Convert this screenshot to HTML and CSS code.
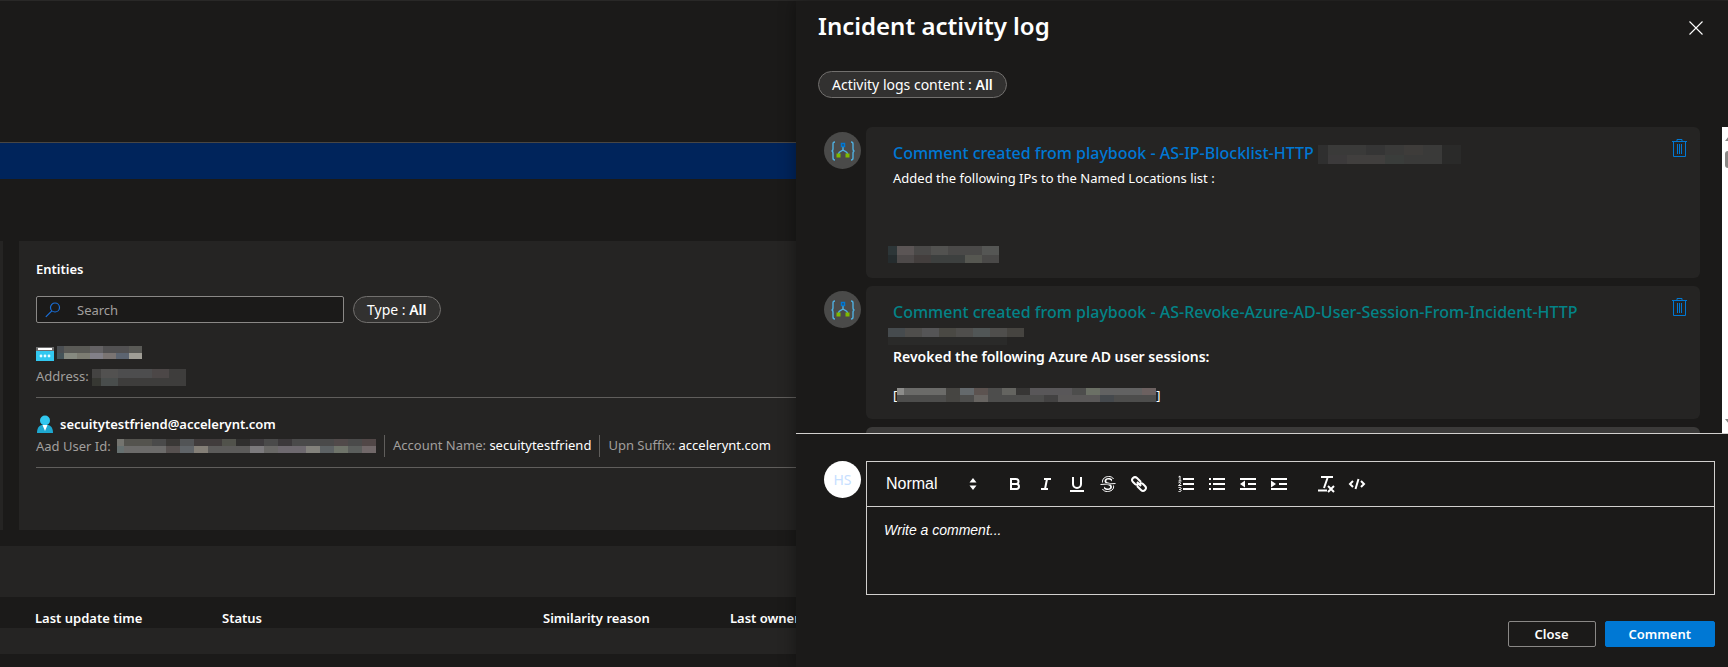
FILE: index.html
```html
<!DOCTYPE html>
<html lang="en">
<head>
<meta charset="utf-8">
<title>Incident activity log</title>
<link rel="stylesheet" href="styles.css">
</head>
<body>
<svg class="sprite" aria-hidden="true">
  <symbol id="playbook" viewBox="0 0 24 20">
    <path d="M4 1C2.500 1 2 1.500 2 3v4.500C2 9 1.500 10 .5 10 1.500 10 2 11 2 12.500V17c0 1.500.5 2 2 2M20 1c1.500 0 2 .5 2 2v4.500c0 1.500.5 2.500 1.500 2.500-1 0-1.500 1-1.500 2.500V17c0 1.500-.5 2-2 2" fill="none" stroke="#50b0e0" stroke-width="1.400"/>
    <path d="M12 6v3M12 8.500c0 2-4.500 1.500-4.500 4.500M12 8.500c0 2 4.500 1.500 4.500 4.500" fill="none" stroke="#50b0e0" stroke-width="1.400"/>
    <path d="M10.500 2.500h3v3h-3z" fill="#3a4a58" stroke="#0078d4" stroke-width="1.500"/>
    <path d="M5.500 12.500h4v4h-4zM14.500 12.500h4v4h-4z" fill="#7fba00"/>
  </symbol>
  <symbol id="trash" viewBox="0 1 16 20">
    <path d="M1 3.500h15M6 3V1.500h5V3M2.500 4v14.500h12V4" fill="none" stroke="currentColor"/>
    <path d="M6.500 6v10M8.500 6v10M10.500 6v10" fill="none" stroke="currentColor"/>
  </symbol>
</svg>
<div class="app">
  <main class="incident">
    <div class="banner"></div>
    <div class="widgets">
      <div class="widget-previous"></div>
      <section class="entities">
        <h2 class="entities-title">Entities</h2>
        <div class="filters">
          <label class="search">
            <svg class="search-icon" viewBox="0 0 16 16" aria-hidden="true"><circle cx="10" cy="5.500" r="4.500" fill="none" stroke="#1a6fd8" stroke-width="1.200"/><path d="M6.800 8.800.8 14.800" stroke="#1a6fd8" stroke-width="1.200"/></svg>
            <input class="search-input" type="text" placeholder="Search" aria-label="Search">
          </label>
          <button class="pill" type="button">Type : <b>All</b></button>
        </div>
        <div class="entity">
          <div class="entity-name">
            <svg class="entity-icon" viewBox="0 0 18 18" aria-hidden="true"><path d="M0 2h18v14H0z" fill="#32c8f0"/><path d="M0 2h18v4H0z" fill="#6e6e6e"/><path d="M2 3h14v2H2z" fill="#fff"/><g fill="#e6fbff"><circle cx="5" cy="11" r="1.400"/><circle cx="9" cy="11" r="1.400"/><circle cx="13" cy="11" r="1.400"/></g></svg>
            <svg class="mask mask-ip" viewBox="0 0 85 13" preserveAspectRatio="none" aria-hidden="true"><path d="M0 0h85v13H0z" fill="#5a5a56"/><path d="M0 0h7v7H0z" fill="#4a4e52"/><path d="M33 0h13v7H33z" fill="#646264"/><path d="M46 0h26v7H46z" fill="#525152"/><path d="M0 7h7v6H0z" fill="#455459"/><path d="M7 7h13v6H7z" fill="#868a80"/><path d="M20 7h13v6H20z" fill="#7c7c72"/><path d="M33 7h13v6H33z" fill="#828088"/><path d="M46 7h13v6H46z" fill="#7a7472"/><path d="M59 7h13v6H59z" fill="#5c6470"/><path d="M72 7h13v6H72z" fill="#a09e96"/></svg>
          </div>
          <div class="entity-facts">
            <span class="fact">Address: <svg class="mask mask-address" viewBox="0 0 94 17" preserveAspectRatio="none" aria-hidden="true"><path d="M0 0h94v17H0z" fill="#3e3d3c"/><path d="M0 0h9v9H0z" fill="#444342"/><path d="M9 0h17v9H9z" fill="#525150"/><path d="M26 0h34v9H26z" fill="#4d4d4e"/><path d="M60 0h17v9H60z" fill="#4c4747"/><path d="M0 9h9v8H0z" fill="#373833"/><path d="M9 9h17v8H9z" fill="#494d4c"/></svg></span>
          </div>
        </div>
        <div class="entity">
          <div class="entity-name">
            <svg class="entity-icon" viewBox="0 0 18 18" aria-hidden="true"><path d="M1 18c0-5 2-7.500 5-8h6c3 .5 5 3 5 8z" fill="#1ea8d0"/><circle cx="9" cy="5.500" r="5" fill="#32c8f0"/><path d="M6.500 10h5L9 16z" fill="#fff"/></svg>
            <b class="entity-label">secuitytestfriend@accelerynt.com</b>
          </div>
          <div class="entity-facts">
            <span class="fact">Aad User Id: <svg class="mask mask-user" viewBox="0 0 259 14" preserveAspectRatio="none" aria-hidden="true"><path d="M0 0h259v14H0z" fill="#4a4a4a"/><path d="M0 0h7v7H0z" fill="#74746f"/><path d="M7 0h28v7H7z" fill="#54534e"/><path d="M49 0h14v7H49z" fill="#3a3836"/><path d="M63 0h14v7H63z" fill="#525456"/><path d="M77 0h28v7H77z" fill="#413c3c"/><path d="M105 0h14v7h-14z" fill="#51524b"/><path d="M119 0h14v7h-14z" fill="#302f2e"/><path d="M133 0h14v7h-14z" fill="#3e3b3e"/><path d="M161 0h14v7h-14z" fill="#3c393b"/><path d="M217 0h14v7h-14z" fill="#514a4a"/><path d="M245 0h14v7h-14z" fill="#514747"/><path d="M0 7h7v7H0z" fill="#667070"/><path d="M7 7h42v7H7z" fill="#6c6b6a"/><path d="M49 7h14v7H49z" fill="#575150"/><path d="M63 7h14v7H63z" fill="#606468"/><path d="M77 7h14v7H77z" fill="#847f77"/><path d="M91 7h42v7H91z" fill="#5c5b5a"/><path d="M133 7h14v7h-14z" fill="#7c7a7d"/><path d="M147 7h14v7h-14z" fill="#696866"/><path d="M161 7h28v7h-28z" fill="#6e696f"/><path d="M189 7h14v7h-14z" fill="#83827c"/><path d="M203 7h14v7h-14z" fill="#5d6264"/><path d="M217 7h14v7h-14z" fill="#6f746a"/><path d="M231 7h14v7h-14z" fill="#5b5e5c"/><path d="M245 7h14v7h-14z" fill="#716869"/></svg></span>
            <span class="fact">Account Name: <em>secuitytestfriend</em></span>
            <span class="fact">Upn Suffix: <em>accelerynt.com</em></span>
          </div>
        </div>
      </section>
    </div>
    <section class="similar">
      <table class="similar-table">
        <thead><tr><th class="col-s">Last update time</th><th class="col-l">Status</th><th class="col-s">Similarity reason</th><th>Last owner</th></tr></thead>
      </table>
      <div class="similar-row"></div>
    </section>
  </main>

  <aside class="panel">
    <header class="panel-head">
      <h1 class="panel-title">Incident activity log</h1>
      <button class="icon-button close-x" type="button" aria-label="Close panel"><svg viewBox="0 0 14 14" width="14" height="14"><path d="M.5.5l13 13M13.500.5l-13 13" stroke="#fff" stroke-width="1.100"/></svg></button>
    </header>
    <div class="panel-filter"><button class="pill" type="button">Activity logs content : <b>All</b></button></div>
    <div class="log">
      <div class="log-list">
        <article class="log-entry">
          <div class="avatar"><svg width="24" height="20" aria-hidden="true"><use href="#playbook"/></svg></div>
          <div class="card card-tall">
            <div class="card-body">
              <h3 class="card-title">Comment created from playbook - AS-IP-Blocklist-HTTP <svg class="mask mask-title" viewBox="0 0 143 19" preserveAspectRatio="none" aria-hidden="true"><path d="M0 0h143v19H0z" fill="#3a3a39"/><path d="M0 0h10v19H0z" fill="#2f2f2f"/><path d="M10 10h19v9H10z" fill="#3c3a3b"/><path d="M29 10h38v9H29z" fill="#413f3e"/><path d="M48 0h19v10H48z" fill="#353535"/><path d="M67 10h19v9H67z" fill="#3a3d3b"/><path d="M86 0h19v10H86z" fill="#3e3c3a"/><path d="M124 0h19v19h-19z" fill="#2a2a29"/></svg></h3>
              <p class="card-text">Added the following IPs to the Named Locations list :</p>
              <svg class="mask mask-list" viewBox="0 0 111 17" preserveAspectRatio="none" aria-hidden="true"><path d="M0 0h111v17H0z" fill="#4a4948"/><path d="M0 0h9v9H0z" fill="#2d3638"/><path d="M9 0h17v9H9z" fill="#5b5555"/><path d="M43 0h17v9H43z" fill="#525250"/><path d="M94 0h17v9H94z" fill="#555654"/><path d="M0 9h9v8H0z" fill="#252c2e"/><path d="M9 9h17v8H9z" fill="#4d4949"/><path d="M26 9h17v8H26z" fill="#433e3d"/><path d="M43 9h34v8H43z" fill="#3d403f"/><path d="M77 9h17v8H77z" fill="#565751"/></svg>
            </div>
            <button class="icon-button" type="button" aria-label="Delete comment"><svg width="16" height="20"><use href="#trash"/></svg></button>
          </div>
        </article>
        <article class="log-entry">
          <div class="avatar"><svg width="24" height="20" aria-hidden="true"><use href="#playbook"/></svg></div>
          <div class="card">
            <div class="card-body">
              <h3 class="card-title card-title-teal">Comment created from playbook - AS-Revoke-Azure-AD-User-Session-From-Incident-HTTP</h3>
              <svg class="mask mask-date" viewBox="0 0 136 17" preserveAspectRatio="none" aria-hidden="true"><path d="M0 0h136v9H0z" fill="#4f4e4c"/><path d="M0 0h17v9H0z" fill="#464b4e"/><path d="M34 0h17v9H34z" fill="#555556"/><path d="M51 0h17v9H51z" fill="#4a4944"/><path d="M85 0h17v9H85z" fill="#515656"/><path d="M119 0h17v9h-17z" fill="#464440"/><path d="M0 9h119v8H0z" fill="#2a2a29"/></svg>
              <p class="card-text card-lead">Revoked the following Azure AD user sessions:</p>
              <p class="card-text card-sessions">[<svg class="mask mask-session" viewBox="0 0 259 14" preserveAspectRatio="none" aria-hidden="true"><path d="M0 0h259v14H0z" fill="#4d4d4c"/><path d="M0 0h7v7H0z" fill="#8c8c8a"/><path d="M7 0h42v7H7z" fill="#6b6b69"/><path d="M49 0h14v14H49z" fill="#464542"/><path d="M63 0h14v7H63z" fill="#64696c"/><path d="M77 0h14v7H77z" fill="#5c5350"/><path d="M105 0h14v7h-14z" fill="#646460"/><path d="M119 0h14v7h-14z" fill="#373635"/><path d="M133 0h42v7h-42z" fill="#595759"/><path d="M189 0h14v7h-14z" fill="#6b7065"/><path d="M203 0h42v7h-42z" fill="#626262"/><path d="M245 0h14v7h-14z" fill="#6c6160"/><path d="M77 7h14v7H77z" fill="#676461"/><path d="M147 7h14v7h-14z" fill="#434242"/><path d="M161 7h42v7h-42z" fill="#5a5858"/><path d="M203 7h14v7h-14z" fill="#45494d"/></svg>]</p>
            </div>
            <button class="icon-button" type="button" aria-label="Delete comment"><svg width="16" height="20"><use href="#trash"/></svg></button>
          </div>
        </article>
        <article class="log-entry"><div class="avatar-gap"></div><div class="card card-next"></div></article>
      </div>
      <div class="scrollbar" aria-hidden="true"><svg class="scroll-arrow" viewBox="0 0 6 8"><path d="M3 6l4-5v5z" fill="#8a8886"/></svg><div class="scroll-thumb"></div><svg class="scroll-arrow" viewBox="0 0 6 8"><path d="M3 2l4 5V2z" fill="#8a8886"/></svg></div>
    </div>

    <form class="composer">
      <div class="composer-row">
        <div class="avatar avatar-user">HS</div>
        <div class="editor">
          <div class="toolbar">
            <label class="format">
              <select class="format-select" aria-label="Text style"><option>Normal</option></select>
              <svg class="format-arrows" viewBox="0 0 18 18" aria-hidden="true"><path d="M5.500 7.500 9 3l3.500 4.500zM5.500 10.500 9 15l3.500-4.500z" fill="#fff"/></svg>
            </label>
            <div class="tools">
              <button class="tool" type="button" aria-label="Bold"><svg viewBox="0 0 18 18"><path d="M5 4h5a2.500 2.500 0 0 1 0 5H5zM5 9h5.500a2.500 2.500 0 0 1 0 5H5z"/></svg></button>
              <button class="tool" type="button" aria-label="Italic"><svg viewBox="0 0 18 18"><path d="M7 4h7M4 14h7M8 14l2-10"/></svg></button>
              <button class="tool" type="button" aria-label="Underline"><svg viewBox="0 0 18 18"><path d="M5 2v7a4 4 0 0 0 8 0V2"/><path class="solid" d="M2 15h14v2H2z"/></svg></button>
              <button class="tool" type="button" aria-label="Strike"><svg viewBox="0 0 18 18"><path class="thin" d="M1.500 9.500l15-1"/><path class="solid" d="M6.500 8a3 3 0 0 1-1-1.700C5.500 4 7.500 3 9.300 3c1.500 0 3 .5 3.700 1.300V6.500C12 5 10.500 4.500 9.300 4.500 8 4.500 7.300 5.200 7.300 6c0 1 1 1.500 3.700 2zM11.500 9.500a3 3 0 0 1 1.500 2.500c0 2-2 3-4 3-1.500 0-3.200-.5-4-1.500v-2C6 13 7.500 13.500 9 13.500c1.400 0 2.200-.6 2.200-1.500 0-1-1-1.600-3.200-2z"/><path class="thin" d="M3.500 7.500c-.5-4 3-6 6-6 2 0 4 .5 5 2.500M14.500 10.500c1 4-3 6-6 6-2 0-4-.5-5-2.500"/></svg></button>
              <button class="tool" type="button" aria-label="Link"><svg viewBox="0 0 18 18"><path d="M11 7l-4-4a2.600 2.600 0 0 0-4 4l2 2a2.600 2.600 0 0 0 3.500 0M7 11l4 4a2.600 2.600 0 0 0 4-4l-2-2a2.600 2.600 0 0 0-3.500 0M7 7l4 4"/></svg></button>
            </div>
            <div class="tools">
              <button class="tool" type="button" aria-label="Numbered list"><svg viewBox="0 0 18 18"><path d="M6 4h11M6 9h11M6 14h11"/><path class="thin" d="M1.500 2 3 1v5M1.500 6h3M1.500 7.800c2.500-1 3 .7 0 2.700h3M1.500 12.500c4-.5 3 2 .8 2 2.700 0 2.700 2.500-.8 2"/></svg></button>
              <button class="tool" type="button" aria-label="Bullet list"><svg viewBox="0 0 18 18"><path d="M5 4h12M5 9h12M5 14h12M1 4h2M1 9h2M1 14h2"/></svg></button>
              <button class="tool" type="button" aria-label="Decrease indent"><svg viewBox="0 0 18 18"><path d="M1 4h16M1 14h16M9 9h8"/><path class="solid" d="M6 5.500v7L1 9z"/></svg></button>
              <button class="tool" type="button" aria-label="Increase indent"><svg viewBox="0 0 18 18"><path d="M1 4h16M1 14h16M9 9h8"/><path class="solid" d="M1 5.500v7L6 9z"/></svg></button>
            </div>
            <div class="tools">
              <button class="tool" type="button" aria-label="Clear formatting"><svg viewBox="0 0 18 18"><path d="M4 2h12M10.500 3 7 13M11 11l6 6M17 11l-6 6"/><path class="solid" d="M1 14.500h9v2H1z"/></svg></button>
              <button class="tool" type="button" aria-label="Code"><svg viewBox="0 0 18 18"><path d="M5 6 2 9l3 3M13 6l3 3-3 3M10.500 4l-3 10"/></svg></button>
            </div>
          </div>
          <textarea class="editor-text" placeholder="Write a comment..." aria-label="Comment"></textarea>
        </div>
      </div>
      <div class="actions">
        <button class="button" type="button">Close</button>
        <button class="button button-primary" type="submit">Comment</button>
      </div>
    </form>
  </aside>
</div>
</body>
</html>
```

FILE: styles.css
```css
* { box-sizing: border-box; }

body {
  margin: 0;
  background: #1b1a19;
  color: #fff;
  font: 13px/20px "Noto Sans", "Open Sans", sans-serif;
}

h1, h2, h3, p { margin: 0; }
b { font-weight: 600; }
em { font-style: normal; color: #fff; }

button, input, select, textarea {
  margin: 0;
  border-radius: 0;
  color: inherit;
  font: inherit;
}

.sprite { position: absolute; width: 0; height: 0; }

.app {
  display: flex;
  min-height: 100vh;
  border-top: 1px solid #292827;
}

/* Incident page behind the panel */
.incident {
  display: flex;
  flex: 199 1 0;
  flex-direction: column;
  min-width: 0;
  overflow: hidden;
  padding-top: 141px;
}

.banner {
  height: 37px;
  border-top: 1px solid #484644;
  background: #00245b;
}

.widgets {
  display: flex;
  gap: 16px;
  margin-top: 62px;
}

.widget-previous { width: 3px; background: #252423; }

.entities {
  flex: 1;
  min-width: 0;
  min-height: 289px;
  padding: 18px 0 0 17px;
  background: #252423;
}

.entities-title { font-size: 13px; font-weight: 600; line-height: 20px; }

.filters { display: flex; gap: 9px; margin-top: 17px; }

.search {
  display: flex;
  align-items: center;
  width: 308px;
  height: 27px;
  border: 1px solid #8a8886;
  border-radius: 2px;
  background: #1b1a19;
}

.search-icon { width: 16px; height: 16px; margin-left: 8px; }

.search-input {
  flex: 1;
  min-width: 0;
  padding: 0 16px;
  border: 0;
  background: none;
}

.search-input::placeholder { color: #a19f9d; opacity: 1; }

.pill {
  height: 27px;
  padding: 0 13px;
  border: 1px solid #72706e;
  border-radius: 14px;
  background: #323130;
  font-size: 14px;
  line-height: 22px;
}

.entity {
  padding: 15px 0 10px;
  border-bottom: 1px solid #605e5c;
}

.filters + .entity { padding-top: 20px; }

.entity-name { display: flex; align-items: center; gap: 3px; height: 22px; }
.entity-icon { width: 18px; height: 18px; }
.entity-label { margin-left: 3px; }

.entity-facts { display: flex; height: 22px; color: #a19f9d; line-height: 22px; white-space: nowrap; }
.fact + .fact { margin-left: 8px; padding-left: 8px; border-left: 1px solid #605e5c; line-height: 20px; }

.mask { display: inline-block; vertical-align: middle; }
.mask-ip { width: 85px; height: 13px; margin-bottom: 4px; }
.mask-address { width: 94px; height: 17px; }
.mask-user { width: 259px; height: 14px; margin-left: 3px; vertical-align: -2px; }
.mask-title { width: 143px; height: 19px; }
.mask-list { display: block; width: 111px; height: 17px; }
.mask-date { display: block; width: 136px; height: 17px; }
.mask-session { width: 259px; height: 14px; vertical-align: -2px; }

.similar { margin-top: 16px; padding-top: 51px; background: #252423; }

.similar-table {
  width: 100%;
  border-collapse: collapse;
  table-layout: fixed;
  background: #1b1a19;
}

.similar-table th {
  height: 31px;
  padding: 11px 0 0 35px;
  font-weight: 600;
  text-align: left;
  white-space: nowrap;
}

.col-s { width: 187px; }
.col-l { width: 321px; }
.similar-row { height: 26px; }

/* Activity log panel */
.panel {
  z-index: 1;
  display: flex;
  flex: 233 1 0;
  flex-direction: column;
  min-width: 0;
  background: #1b1a19;
  box-shadow: 0 0 16px rgba(0, 0, 0, .4);
}

.panel-head {
  display: flex;
  justify-content: space-between;
  padding: 8px 25px 0 22px;
}

.panel-title { font-size: 24px; font-weight: 600; line-height: 34px; }

.icon-button {
  display: flex;
  align-items: flex-start;
  padding: 0;
  border: 0;
  background: none;
  color: #0078d4;
}

.close-x { padding-top: 12px; }
.panel-filter { display: flex; padding: 28px 22px 0; }

.log {
  display: flex;
  height: 306px;
  margin-top: 29px;
  overflow: hidden;
}

.log-list {
  display: flex;
  flex: 1;
  flex-direction: column;
  gap: 8px;
  min-width: 0;
  padding: 0 22px 0 28px;
}

.log-entry { display: flex; gap: 5px; }

.avatar {
  display: flex;
  flex: none;
  align-items: center;
  justify-content: center;
  width: 37px;
  height: 37px;
  margin-top: 5px;
  border-radius: 50%;
  background: #4a4a49;
}

.avatar-user { margin-top: 0; background: #fff; color: #c7e0ff; font-size: 14px; }
.avatar-gap { flex: none; width: 37px; }

.card {
  display: flex;
  flex: 1;
  align-items: flex-start;
  min-width: 0;
  min-height: 133px;
  padding: 12px 13px 0 27px;
  border-radius: 6px;
  background: #252423;
}

.card-tall { min-height: 151px; }
.card-next { background: #3b3a39; }
.card-body { flex: 1; min-width: 0; }

.card-title {
  color: #0078d4;
  font-size: 16px;
  font-weight: 500;
  line-height: 29px;
  white-space: nowrap;
}

.card-title-teal { color: #038387; }
.card-text { line-height: 20px; }
.card-lead { font-size: 14px; font-weight: 600; }
.mask-list { margin: 58px 0 0 -5px; }
.mask-date { margin: 1px 0 2px -5px; }
.card-sessions { margin-top: 18px; }

.scrollbar {
  display: flex;
  flex-direction: column;
  width: 6px;
  background: #fff;
}

.scroll-arrow { width: 6px; height: 8px; margin: 8px 0; overflow: hidden; }
.scroll-thumb { height: 17px; margin: 0 0 auto 3px; border-radius: 8px 0 0 8px; background: #8a8886; }

.composer { padding: 27px 13px 19px 28px; border-top: 1px solid #d2d0ce; }
.composer-row { display: flex; gap: 5px; }

.editor { flex: 1; min-width: 0; border: 1px solid #d2d0ce; font-family: "Liberation Sans", Arial, sans-serif; }

.toolbar {
  display: flex;
  align-items: center;
  gap: 19px;
  height: 45px;
  padding: 0 10px;
  border-bottom: 1px solid #d2d0ce;
}

.format { display: flex; align-items: center; width: 105px; }
.format-select { flex: 1; min-width: 0; padding: 0 0 0 9px; border: 0; appearance: none; background: none; font-size: 16px; }
.format-select option { color: #000; }
.format-arrows { width: 18px; height: 18px; }

.tools { display: flex; gap: 3px; }
.tool { width: 28px; height: 24px; padding: 3px 5px; border: 0; background: none; }
.tool svg { display: block; width: 18px; height: 18px; fill: none; stroke: #fff; stroke-width: 2; }
.tool .thin { stroke-width: 1; }
.tool .solid { fill: #fff; stroke: none; }

.editor-text {
  display: block;
  width: 100%;
  height: 87px;
  padding: 13px 17px;
  border: 0;
  outline: 0;
  background: none;
  font-size: 14px;
  resize: none;
}

.editor-text::placeholder { color: #fff; font-style: italic; opacity: 1; }

.actions { display: flex; justify-content: flex-end; gap: 9px; margin-top: 26px; }

.button {
  min-width: 88px;
  height: 26px;
  padding: 0 23px;
  border: 1px solid #8a8886;
  border-radius: 2px;
  background: none;
  font-weight: 600;
  line-height: 22px;
}

.button-primary { border-color: #0078d4; background: #0078d4; }
```
